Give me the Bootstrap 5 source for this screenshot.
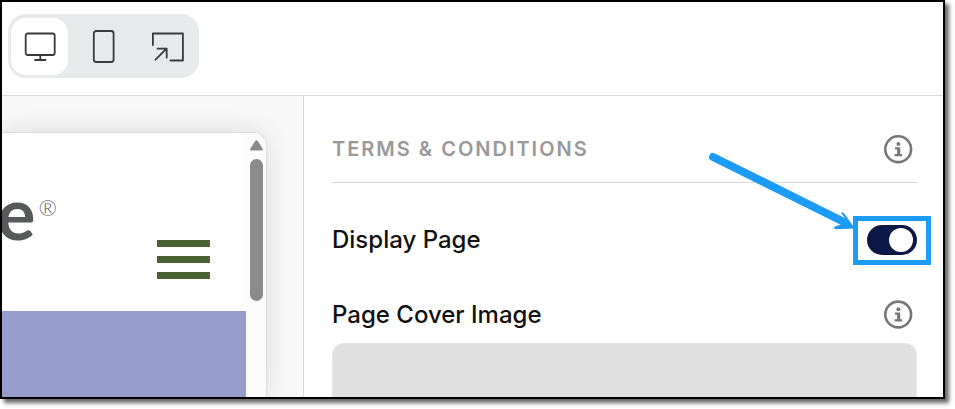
<!DOCTYPE html>
<html lang="en">
<head>
<meta charset="utf-8">
<meta name="viewport" content="width=device-width, initial-scale=1">
<title>Terms &amp; Conditions</title>
<link href="https://cdn.jsdelivr.net/npm/bootstrap@5.3.0/dist/css/bootstrap.min.css" rel="stylesheet">
<style>
  body { font-family: Inter, "Open Sans", sans-serif; color: #111; background: #fff; padding: 0 10px 10px 0; }
  .window-frame { border: 2px solid #000; box-shadow: 4px 4px 4px rgba(0,0,0,.6); background: #fff; }
  .topbar { padding: 12px 6px 17px; border-bottom: 1px solid #d9dadc; }
  .device-switch { background: #e8e9eb; border-radius: 18px; padding: 4px 3px 3px; gap: 7px; }
  .device-btn, .device-btn.active { width: 57px; height: 57px; border-radius: 15px; color: #3a3a3c; }
  .device-btn.active { background: #fff; }
  .device-btn svg, .info-btn svg, .pointer-arrow, .scroll-arrow { display: block; }
  .preview-pane { flex: 0 0 302px; background: #f8f8f8; border-right: 1px solid #d9dadc; padding: 36px 36px 0 0; }
  .preview-window { border: 1px solid #ddd; border-width: 1px 1px 0 0; border-top-right-radius: 14px; box-shadow: 0 0 24px rgba(0,0,0,.12); background: #fff; }
  .site-header { height: 178px; padding: 0 36px 32px 0; }
  .site-logo { font-family: Lato, sans-serif; color: #58595b; margin: 39px 0 0 -5px; }
  .logo-word { font-size: 72px; line-height: 80px; font-weight: 700; }
  .logo-reg { font-size: 22px; line-height: 24px; font-weight: 300; margin-top: 24px; margin-left: 3px; color: #58595b; }
  .menu-btn { gap: 9px; width: 53px; }
  .menu-btn span { height: 7px; background: #4a6134; }
  .site-hero { background: #969dcb; }
  .scroll-track { width: 20px; background: #fcfcfc; padding: 7px 3px 0 4px; gap: 8px; border-top-right-radius: 13px; }
  .scroll-thumb { height: 142px; width: 13px; border-radius: 7px; background: #8b8b8b; }
  .settings-pane { padding: 38px 26px 0 28px; }
  .panel-head { padding-bottom: 18px; border-bottom: 1px solid #d9d9d9; }
  .panel-title { font-size: 20px; line-height: 30px; font-weight: 600; letter-spacing: 2px; color: #999; }
  .field-label { font-size: 24px; line-height: 30px; font-weight: 500; }
  .info-btn { color: #777; margin-right: 4px; }
  .display-row { margin-top: 42px; }
  .cover-row { margin-top: 45px; }
  .toggle-wrap .form-check-input { width: 50px; height: 30px; border: 0; border-radius: 15px; margin: 0; background: #0b1846; padding: 3px 4px; display: flex; justify-content: flex-end; }
  .toggle-wrap .form-check-input::before { content: ""; width: 24px; height: 24px; border-radius: 50%; background: #fff; }
  .toggle-wrap .form-check-input:not(:checked) { background: #999; justify-content: flex-start; }
  .highlight-box { position: absolute; inset: -9px -14px -10px; border: 5px solid #1c9cf6; pointer-events: none; }
  .pointer-arrow { position: absolute; left: -162px; top: -75px; pointer-events: none; }
  .cover-drop { margin-top: 13px; background: #e0e0e0; border: 1px solid #e6e6e6; border-bottom: 0; border-radius: 12px 12px 0 0; }
</style>
<script src="https://cdn.jsdelivr.net/npm/bootstrap@5.3.0/dist/js/bootstrap.bundle.min.js"></script>
</head>
<body class="vh-100 d-flex flex-column overflow-hidden">
<div class="window-frame flex-grow-1 d-flex flex-column overflow-hidden">
  <header class="topbar d-flex">
    <div class="device-switch d-flex" role="group" aria-label="Preview size">
      <button type="button" class="device-btn btn border-0 p-0 d-flex align-items-center justify-content-center active" aria-label="Desktop">
        <svg width="34" height="34" viewBox="0 0 34 34" fill="none" stroke="currentColor" stroke-width="1.8" stroke-linecap="round"><rect x="2.7" y="3.500" width="29" height="21.500" rx="2"/><path d="M17.3 25v5M12 30h10.500"/></svg>
      </button>
      <button type="button" class="device-btn btn border-0 p-0 d-flex align-items-center justify-content-center" aria-label="Mobile">
        <svg width="34" height="34" viewBox="0 0 34 34" fill="none" stroke="currentColor" stroke-width="1.8"><rect x="6.800" y="1" width="19.800" height="31" rx="2.500"/></svg>
      </button>
      <button type="button" class="device-btn btn border-0 p-0 d-flex align-items-center justify-content-center" aria-label="Open in new tab">
        <svg width="34" height="34" viewBox="0 0 34 34" fill="none" stroke="currentColor" stroke-width="1.800" stroke-linecap="round" stroke-linejoin="round"><path d="M1.900 15V3.500h30V30.500H19.500M4.500 29.700l11-11M6.500 18.700h9.200v9"/></svg>
      </button>
    </div>
  </header>
  <main class="d-flex flex-grow-1 overflow-hidden">
    <section class="preview-pane d-flex overflow-hidden" aria-label="Preview">
      <div class="preview-window d-flex flex-grow-1">
        <div class="flex-grow-1 d-flex flex-column">
          <div class="site-header d-flex justify-content-between align-items-end overflow-hidden">
            <div class="site-logo d-flex align-self-start"><span class="logo-word">e</span><span class="logo-reg">®</span></div>
            <button type="button" class="menu-btn btn border-0 rounded-0 p-0 d-flex flex-column" aria-label="Menu"><span class="w-100"></span><span class="w-100"></span><span class="w-100"></span></button>
          </div>
          <div class="site-hero flex-grow-1"></div>
        </div>
        <div class="scroll-track d-flex flex-column">
          <svg class="scroll-arrow" width="13" height="11" viewBox="0 0 13 11"><path d="M5.200.9Q6.500-.4 7.800.9L12.600 8.500Q13.300 10.500 11.800 10.500H1.200Q-.3 10.500.4 8.500Z" fill="#8b8b8b"/></svg>
          <div class="scroll-thumb"></div>
        </div>
      </div>
    </section>
    <section class="settings-pane flex-grow-1 d-flex flex-column">
      <div class="panel-head d-flex align-items-center justify-content-between">
        <h1 class="panel-title m-0">TERMS &amp; CONDITIONS</h1>
        <button type="button" class="info-btn btn border-0 p-0" aria-label="About terms and conditions">
          <svg width="30" height="30" viewBox="0 0 30 30"><circle cx="15.200" cy="15.200" r="12.900" fill="none" stroke="currentColor" stroke-width="2.600"/><circle cx="15.400" cy="10" r="2" fill="currentColor"/><path d="M12 13.300h5.200v6.700h1.800v2.300h-7.400v-2.300h2.500v-4.600H12z" fill="currentColor"/></svg>
        </button>
      </div>
      <div class="display-row d-flex align-items-center justify-content-between">
        <label class="field-label" for="displayPage">Display Page</label>
        <div class="toggle-wrap position-relative">
          <input class="form-check-input" type="checkbox" role="switch" id="displayPage" checked>
          <span class="highlight-box"></span>
          <svg class="pointer-arrow" width="152" height="84" viewBox="0 0 152 84"><path d="M8 7L139 72" stroke="#1c9cf6" stroke-width="8" stroke-linecap="round"/><path d="M136.200 63Q137.300 61.500 138.800 63L150 78.500 130 79.200Q128 78 130 76.500L136 74.500 140 68Z" fill="#1c9cf6"/></svg>
        </div>
      </div>
      <div class="cover-row d-flex align-items-center justify-content-between">
        <h2 class="field-label m-0">Page Cover Image</h2>
        <button type="button" class="info-btn btn border-0 p-0" aria-label="About the page cover image">
          <svg width="30" height="30" viewBox="0 0 30 30"><circle cx="15.200" cy="14.500" r="12.900" fill="none" stroke="currentColor" stroke-width="2.600"/><circle cx="15.400" cy="9.300" r="2" fill="currentColor"/><path d="M12 12.600h5.200v6.700h1.800v2.300h-7.400v-2.300h2.500v-4.600H12z" fill="currentColor"/></svg>
        </button>
      </div>
      <div class="cover-drop flex-grow-1"></div>
    </section>
  </main>
</div>
</body>
</html>
